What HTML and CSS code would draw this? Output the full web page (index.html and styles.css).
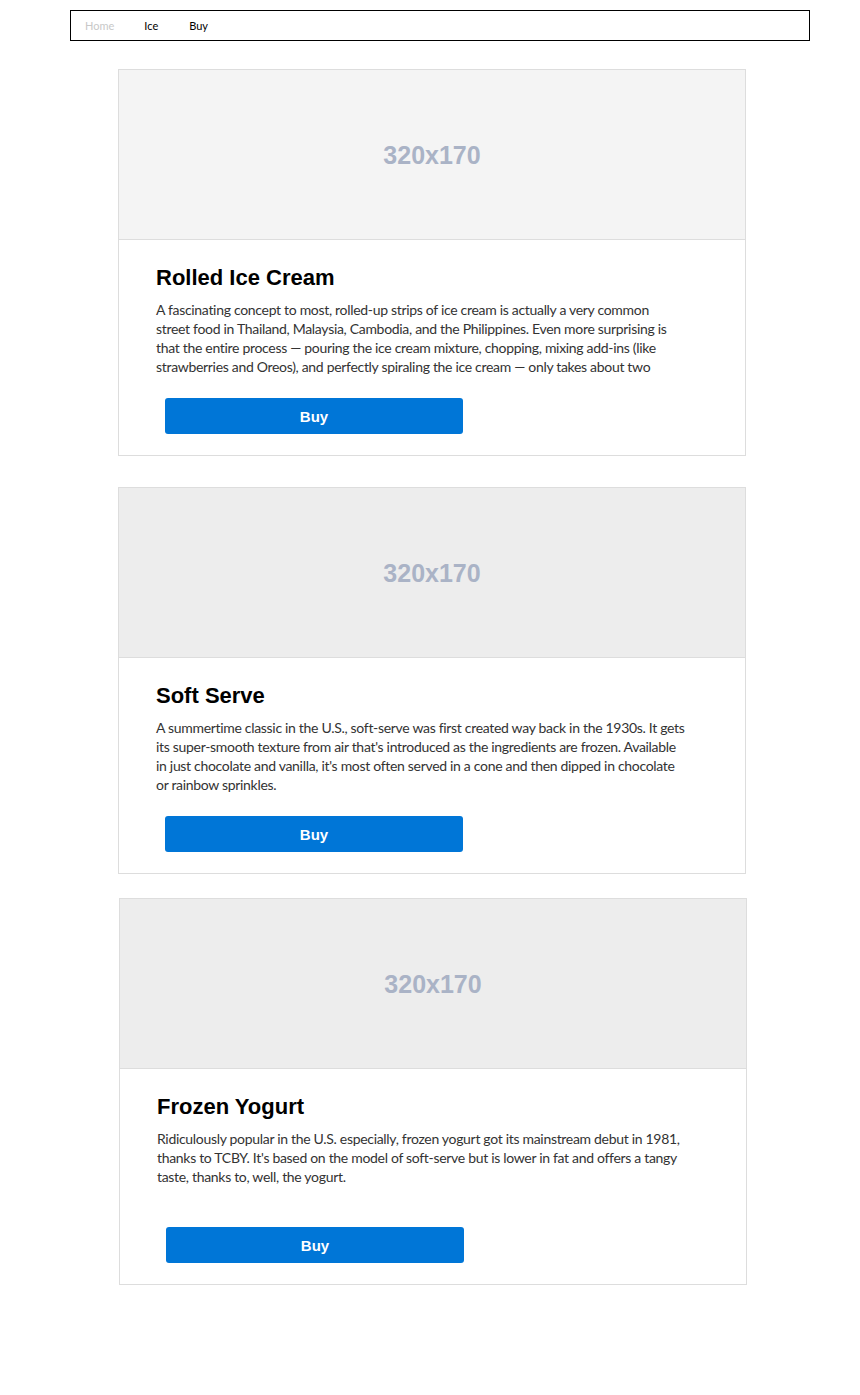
FILE: index.html
```html
<!DOCTYPE html>
<html lang="en">
<head>
<meta charset="utf-8">
<title>Ice Cream</title>
<link rel="stylesheet" href="styles.css">
</head>
<body>
<nav class="nav">
  <a class="nav-link nav-link-muted" href="#">Home</a>
  <a class="nav-link" href="#">Ice</a>
  <a class="nav-link" href="#">Buy</a>
</nav>
<main class="list">
  <article class="card card-first">
    <div class="thumb thumb-light"><span class="thumb-label">320x170</span></div>
    <div class="card-body">
      <h2 class="card-title">Rolled Ice Cream</h2>
      <p class="card-text">A fascinating concept to most, rolled-up strips of ice cream is actually a very common street food in Thailand, Malaysia, Cambodia, and the Philippines. Even more surprising is that the entire process — pouring the ice cream mixture, chopping, mixing add-ins (like strawberries and Oreos), and perfectly spiraling the ice cream — only takes about two</p>
      <button class="buy-btn" type="button">Buy</button>
    </div>
  </article>
  <article class="card card-second">
    <div class="thumb"><span class="thumb-label">320x170</span></div>
    <div class="card-body">
      <h2 class="card-title">Soft Serve</h2>
      <p class="card-text">A summertime classic in the U.S., soft-serve was first created way back in the 1930s. It gets its super-smooth texture from air that's introduced as the ingredients are frozen. Available in just chocolate and vanilla, it's most often served in a cone and then dipped in chocolate or rainbow sprinkles.</p>
      <button class="buy-btn" type="button">Buy</button>
    </div>
  </article>
  <article class="card card-third">
    <div class="thumb"><span class="thumb-label">320x170</span></div>
    <div class="card-body">
      <h2 class="card-title">Frozen Yogurt</h2>
      <p class="card-text">Ridiculously popular in the U.S. especially, frozen yogurt got its mainstream debut in 1981, thanks to TCBY. It's based on the model of soft-serve but is lower in fat and offers a tangy taste, thanks to, well, the yogurt.</p>
      <button class="buy-btn" type="button">Buy</button>
    </div>
  </article>
</main>
</body>
</html>
```
FILE: styles.css
```css
html, body {
  margin: 0;
  padding: 0;
  background: #ffffff;
}

body {
  font-family: "Liberation Sans", Arial, sans-serif;
  color: #000;
  padding-top: 10px;
  padding-bottom: 110px;
}

.nav {
  display: flex;
  align-items: center;
  box-sizing: border-box;
  width: 740px;
  height: 31px;
  margin-left: 70px;
  border: 1px solid #000;
  padding: 0 0 1px 0;
}

.nav-link {
  font-family: Lato, "Noto Sans", sans-serif;
  font-size: 11px;
  color: #000;
  text-decoration: none;
  padding: 0 15px;
}

.nav-link:first-child {
  padding-left: 14px;
}

.nav-link:last-child {
  padding-left: 16px;
}

.nav-link-muted {
  color: #c8c8c8;
}

.list {
  display: flex;
  flex-direction: column;
  margin-top: 28px;
}

.card {
  box-sizing: border-box;
  width: 628px;
  margin-left: 118px;
  border: 1px solid #dddddd;
  background: #fff;
}

.card-second {
  margin-top: 31px;
}

.card-third {
  margin-top: 24px;
  margin-left: 119px;
}

.thumb {
  box-sizing: border-box;
  height: 170px;
  padding-top: 2px;
  border-bottom: 1px solid #dddddd;
  background: #ededed;
  display: flex;
  align-items: center;
  justify-content: center;
}

.thumb-light {
  background: #f4f4f4;
}

.thumb-label {
  font-family: "Liberation Sans", Arial, sans-serif;
  font-weight: bold;
  font-size: 25px;
  color: #aab3c6;
}

.card-body {
  padding: 25px 37px 21px 37px;
  display: flex;
  flex-direction: column;
  align-items: flex-start;
}

.card-title {
  margin: 0;
  font-family: "Liberation Sans", Arial, sans-serif;
  font-weight: bold;
  font-size: 22px;
  line-height: 25px;
  color: #000;
}

.card-text {
  margin: 10px 0 0 0;
  width: 529.6px;
  height: 76px;
  font-family: Lato, "Noto Sans", sans-serif;
  font-size: 14px;
  letter-spacing: -0.31px;
  line-height: 19px;
  color: #333;
}

.buy-btn {
  margin: 22px 0 0 9px;
  width: 298px;
  height: 36px;
  border: none;
  border-radius: 3px;
  background: #0076d7;
  color: #fff;
  font-family: "Liberation Sans", Arial, sans-serif;
  font-weight: bold;
  font-size: 15px;
  padding: 0;
  cursor: pointer;
}
```
